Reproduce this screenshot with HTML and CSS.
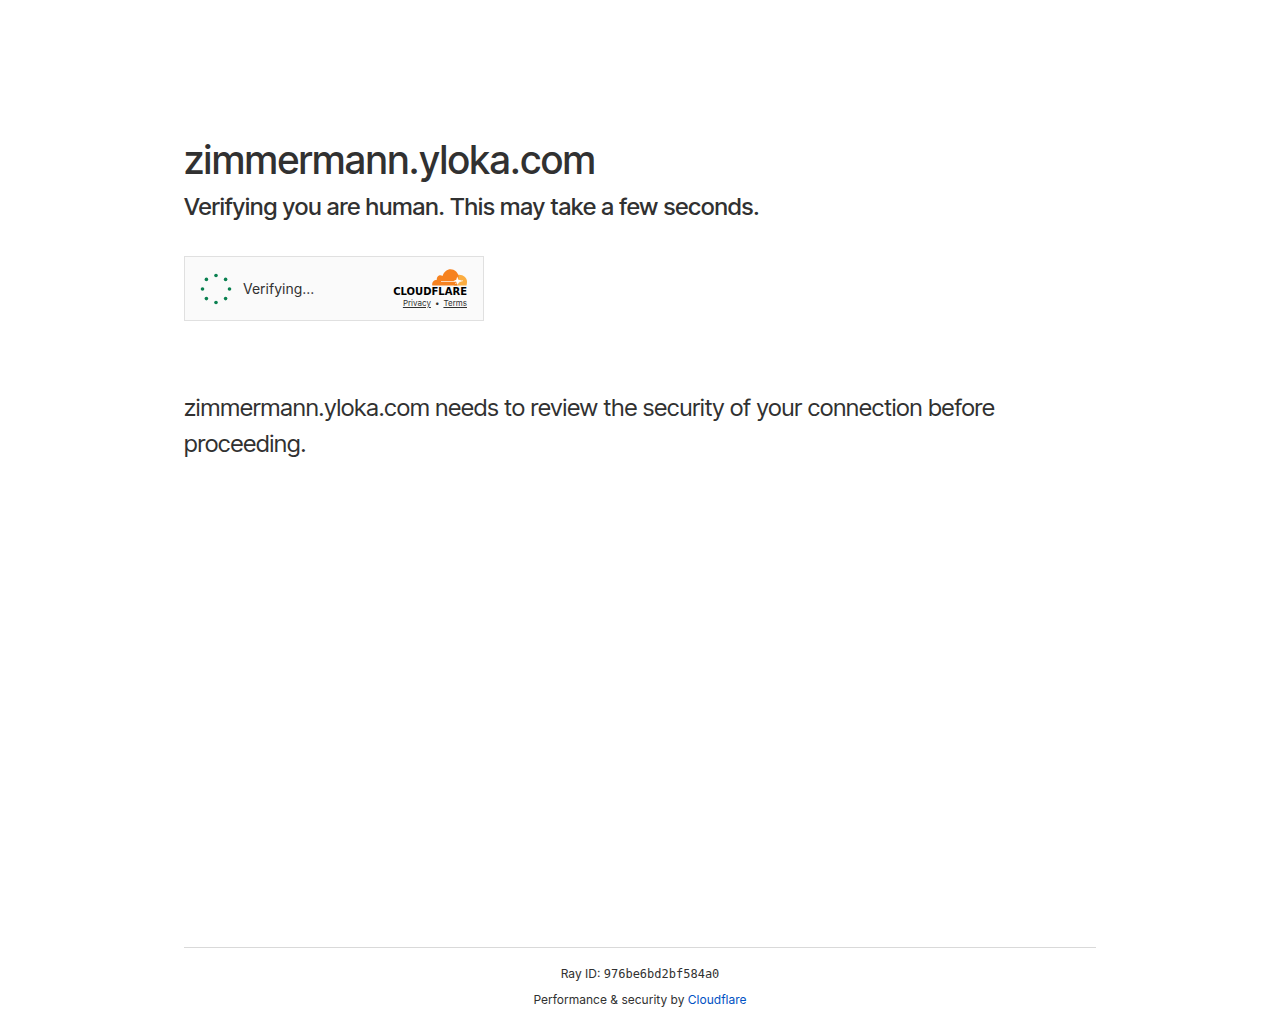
FILE: index.html
```html
<!DOCTYPE html>
<html lang="en">
<head>
<meta charset="utf-8">
<meta name="viewport" content="width=device-width, initial-scale=1">
<title>Just a moment...</title>
<link rel="stylesheet" href="styles.css">
</head>
<body>
<main class="main">
  <h1 class="host">zimmermann.yloka.com</h1>
  <h2 class="status">Verifying you are human. This may take a few seconds.</h2>
  <section class="widget" aria-label="Verification">
    <svg class="spinner" viewBox="0 0 32 32" aria-hidden="true">
      <circle cx="16" cy="2.500" r="1.800"/><circle cx="25.600" cy="6.400" r="1.800"/>
      <circle cx="29.500" cy="16" r="1.800"/><circle cx="25.600" cy="25.600" r="1.800"/>
      <circle cx="16" cy="29.500" r="1.800"/><circle cx="6.400" cy="25.600" r="1.800"/>
      <circle cx="2.500" cy="16" r="1.800"/><circle cx="6.400" cy="6.400" r="1.800"/>
    </svg>
    <span class="verifying">Verifying...</span>
    <div class="brand">
      <svg class="cloud" viewBox="0 0 36 17" aria-hidden="true">
        <path fill="#fbad41" d="M27 5.800C31.500 5.100 36 8.200 36 12.600Q36 14.500 35.500 16.500H23Z"/>
        <path fill="#f6821f" d="M1.300 16.500C.7 13.300 2.800 10.900 5.900 10.700C5.400 7.500 8.600 5.200 11.500 6.900C13 2.800 16.200.3 19.500.3C23.800.3 26.700 3.200 27.700 7.200L26.200 16.500Z"/>
        <path fill="none" stroke="#fff" stroke-width=".7" d="M10 12.500H24M24 14.500L32 11.600"/>
        <path fill="#fff" d="M26.200 7.500L27.400 10.700L31 11.600L28 13L26.700 16L25.500 13L22.500 12L25.300 10.700Z"/>
      </svg>
      <span class="wordmark">CLOUDFLARE</span>
      <div class="terms"><a href="#privacy">Privacy</a><span>•</span><a href="#terms">Terms</a></div>
    </div>
  </section>
  <p class="message">zimmermann.yloka.com needs to review the security of your connection before proceeding.</p>
</main>
<footer class="footer">
  <div class="footer-inner">
    <div>Ray ID: <code>976be6bd2bf584a0</code></div>
    <div>Performance &amp; security by <a class="link" href="#cloudflare">Cloudflare</a></div>
  </div>
</footer>
</body>
</html>
```
FILE: styles.css
```css
* { box-sizing: border-box; margin: 0; padding: 0; }
body {
  display: flex;
  flex-direction: column;
  min-height: 100vh;
  background: #fff;
  color: #313131;
  font-family: Inter, "Liberation Sans", sans-serif;
}
.main {
  flex: 1;
  width: 100%;
  max-width: 960px;
  margin: 0 auto;
  padding: 130px 24px 32px;
}
.host, .status, .message { font-family: "Inter Tight", Inter, "Liberation Sans", sans-serif; }
.host { font-size: 39px; font-weight: 500; line-height: 60px; }
.status { font-size: 24px; font-weight: 500; line-height: 34px; }
.widget {
  display: flex;
  align-items: center;
  width: 300px;
  height: 65px;
  margin-top: 32px;
  padding: 0 16px 0 15px;
  border: 1px solid #e0e0e0;
  background: #fafafa;
}
.spinner { width: 32px; height: 32px; fill: #0a8050; }
.verifying { margin-left: 11px; font-size: 14px; line-height: 20px; }
.brand { display: flex; flex-direction: column; align-items: flex-end; margin-left: auto; }
.cloud { width: 36px; height: 17px; }
.wordmark {
  color: #000;
  font-family: "DejaVu Sans", sans-serif;
  font-size: 10px;
  font-weight: 700;
  line-height: 12px;
}
.terms { display: flex; gap: 4px; font-size: 8px; line-height: 10px; }
.terms a { color: #313131; }
.message { margin-top: 69px; font-size: 24px; line-height: 36px; }
.footer { padding: 0 24px; font-size: 12px; line-height: 18px; text-align: center; }
.footer-inner {
  display: flex;
  flex-direction: column;
  gap: 8px;
  max-width: 912px;
  margin: 0 auto;
  padding: 17px 0 15px;
  border-top: 1px solid #d9d9d9;
}
.footer code { font-family: "DejaVu Sans Mono", monospace; font-size: 12px; }
.link { color: #0051c3; text-decoration: none; }
```
